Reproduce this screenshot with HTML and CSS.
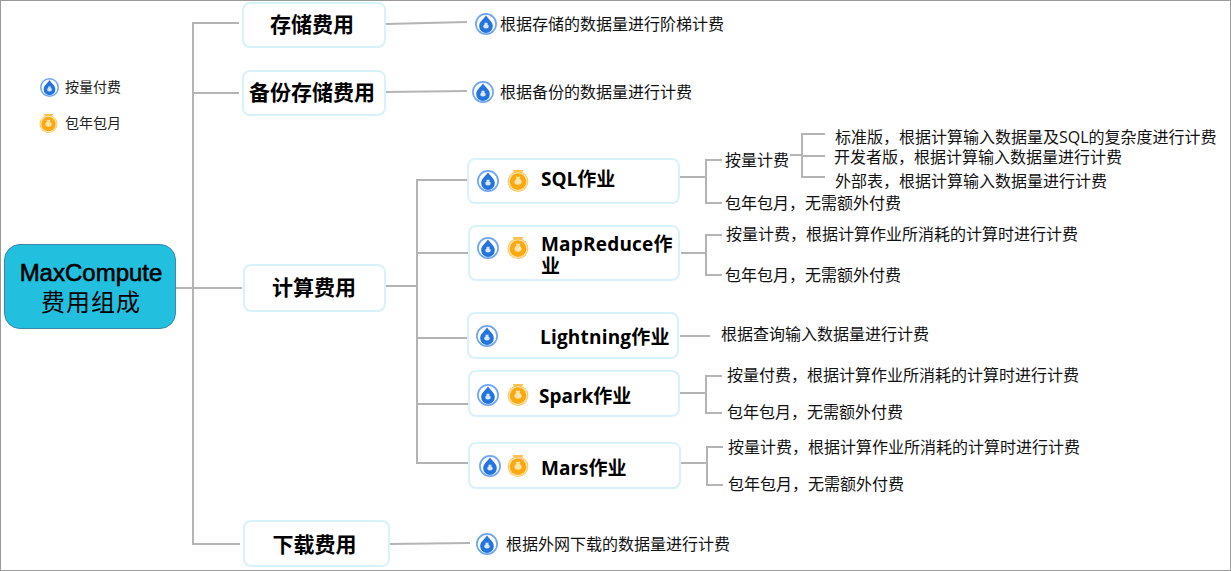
FILE: index.html
```html
<!DOCTYPE html>
<html lang="zh">
<head>
<meta charset="utf-8">
<title>MaxCompute 费用组成</title>
<link rel="stylesheet" href="styles.css">
</head>
<body>
<svg class="defs" width="0" height="0" aria-hidden="true">
  <symbol id="pay" viewBox="0 0 22 22">
    <circle cx="11" cy="11" r="10.100" fill="#fff" stroke="#6fa6f4" stroke-width="1.700"/>
    <path d="M11 2.200C8.800 6 4.200 8.600 4.200 13.200a6.800 6.800 0 0 0 13.600 0C17.800 8.600 13.200 6 11 2.200Z" fill="#2474de"/>
    <path d="M9.300 9.800h3.400l-.5 1.400c1 .5 1.500 1.300 1.500 2.300 0 1.300-1 2-2.700 2s-2.700-.7-2.700-2c0-1 .5-1.800 1.500-2.300Z" fill="#d9e8fc"/>
  </symbol>
  <symbol id="year" viewBox="0 0 22 22">
    <circle cx="11" cy="11.600" r="10.400" fill="#ffc964"/>
    <path d="M5.800 0h10.400l-1.400 3.800H7.200Z" fill="#ffc050"/>
    <circle cx="11" cy="11.600" r="9.200" fill="#fff4dc"/>
    <circle cx="11" cy="11.600" r="8.400" fill="#fba90e"/>
    <path d="M8.600 6.800h4.800l-1 2.200c1.400.7 2.200 1.800 2.200 3.100 0 1.700-1.200 2.600-3.600 2.600s-3.600-.9-3.600-2.600c0-1.300.8-2.400 2.200-3.100Z" fill="#ffe6b0"/>
  </symbol>
</svg>
<main class="canvas">
  <svg class="wires" width="1231" height="571" aria-hidden="true">
    <path d="M239 23H193V544H240"/>
    <path d="M193 93H239M176 288H242"/>
    <path d="M386 24L467 22M386 92L467 91M389 544L470 543"/>
    <path d="M386 286H417M467 180H417V463H469M417 253H469M417 338H468M417 404H469"/>
    <path d="M680 177H706M722 160H706V203H722"/>
    <path d="M790 155H802M825 134H802V177H825M802 156H825"/>
    <path d="M681 253H706M722 235H706V275H722"/>
    <path d="M680 336H710"/>
    <path d="M680 393H706M722 376H706V413H722"/>
    <path d="M681 463H707M723 447H707V485H723"/>
  </svg>

  <div class="legend legend-pay"><svg class="icon"><use href="#pay"/></svg><span>按量付费</span></div>
  <div class="legend legend-year"><svg class="icon"><use href="#year"/></svg><span>包年包月</span></div>

  <div class="root"><b>MaxCompute</b><span>费用组成</span></div>

  <div class="node top n-store">存储费用</div>
  <div class="node top n-backup">备份存储费用</div>
  <div class="node top n-compute">计算费用</div>
  <div class="node top n-download">下载费用</div>

  <div class="node job j-sql"><svg class="icon"><use href="#pay"/></svg><svg class="icon"><use href="#year"/></svg><span class="job-name">SQL作业</span></div>
  <div class="node job j-mr"><svg class="icon"><use href="#pay"/></svg><svg class="icon"><use href="#year"/></svg><span class="job-name">MapReduce作业</span></div>
  <div class="node job j-light"><svg class="icon"><use href="#pay"/></svg><span class="job-name">Lightning作业</span></div>
  <div class="node job j-spark"><svg class="icon"><use href="#pay"/></svg><svg class="icon"><use href="#year"/></svg><span class="job-name">Spark作业</span></div>
  <div class="node job j-mars"><svg class="icon"><use href="#pay"/></svg><svg class="icon"><use href="#year"/></svg><span class="job-name">Mars作业</span></div>

  <div class="note with-icon w1"><svg class="icon"><use href="#pay"/></svg><span>根据存储的数据量进行阶梯计费</span></div>
  <div class="note with-icon w2"><svg class="icon"><use href="#pay"/></svg><span>根据备份的数据量进行计费</span></div>
  <div class="note with-icon w3"><svg class="icon"><use href="#pay"/></svg><span>根据外网下载的数据量进行计费</span></div>

  <div class="note t1">按量计费</div>
  <div class="note t2">标准版，根据计算输入数据量及SQL的复杂度进行计费</div>
  <div class="note t3">开发者版，根据计算输入数据量进行计费</div>
  <div class="note t4">外部表，根据计算输入数据量进行计费</div>
  <div class="note t5">包年包月，无需额外付费</div>
  <div class="note t6">按量计费，根据计算作业所消耗的计算时进行计费</div>
  <div class="note t7">包年包月，无需额外付费</div>
  <div class="note t8">根据查询输入数据量进行计费</div>
  <div class="note t9">按量付费，根据计算作业所消耗的计算时进行计费</div>
  <div class="note t10">包年包月，无需额外付费</div>
  <div class="note t11">按量计费，根据计算作业所消耗的计算时进行计费</div>
  <div class="note t12">包年包月，无需额外付费</div>
</main>
</body>
</html>
```
FILE: styles.css
```css
* { box-sizing: border-box; }
html, body { margin: 0; padding: 0; background: #fff; }
body { width: 1231px; height: 571px; overflow: hidden; }
.defs { position: absolute; }
.canvas {
  position: relative;
  width: 1231px;
  height: 571px;
  border: 1px solid #9a9a9a;
  font-family: "Open Sans", "Noto Sans CJK SC", sans-serif;
  color: #000;
  overflow: hidden;
}
.wires { position: absolute; left: -1px; top: -1px; }
.wires path { fill: none; stroke: #b4b4b4; stroke-width: 2; }

.icon { width: 22px; height: 22px; flex: none; }

.legend, .note, .node, .root { position: absolute; }
.legend { display: flex; align-items: center; font-size: 14px; line-height: 20px; color: #222; }
.legend .icon { width: 19px; height: 19px; }
.legend-pay { left: 39px; top: 76px; gap: 6px; }
.legend-year { left: 38px; top: 112px; gap: 7px; }

.root {
  left: 3px; top: 243px; width: 172px; height: 85px;
  background: #22bfdf;
  border: 1px solid #3d87a8;
  border-radius: 16px;
  display: flex; flex-direction: column; align-items: center; justify-content: center;
  padding-top: 1px;
  color: #000;
  font-size: 24px;
  line-height: 29px;
}
.root b { font-family: "Liberation Sans", sans-serif; font-size: 24px; font-weight: 400; -webkit-text-stroke: .6px #000; margin-left: 2px; }
.root span { letter-spacing: 1px; margin-left: 2px; }

.node {
  background: #fff;
  border: 2px solid #d8f2f9;
  border-radius: 8px;
  color: #000;
  font-weight: 700;
  display: flex; align-items: center;
}
.top { justify-content: center; font-size: 21px; height: 46px; padding-bottom: 2px; }
.n-store { left: 241px; top: 1px; width: 144px; padding: 0 4px 4px 0; }
.n-backup { left: 241px; top: 69px; width: 144px; padding: 0 4px 4px 0; }
.n-compute { left: 242px; top: 263px; width: 143px; height: 48px; padding: 0 1px 4px 0; }
.n-download { left: 242px; top: 519px; width: 147px; height: 47px; padding: 0 4px 1px 0; }

.job { font-size: 19px; line-height: 22px; gap: 8px; }
.job-name { display: block; }
.j-sql { left: 466px; top: 157px; width: 213px; height: 46px; padding: 0 0 4px 8px; }
.j-sql .icon { margin-bottom: -4px; }
.j-sql .job-name { margin-left: 4px; }
.j-mr { left: 467px; top: 224px; width: 212px; height: 56px; padding-left: 7px; }
.j-mr .icon { margin-bottom: 10px; }
.j-mr .job-name { margin: 4px 0 0 4px; width: 138px; letter-spacing: .2px; }
.j-light { left: 466px; top: 311px; width: 212px; height: 47px; padding-left: 7px; }
.j-light .job-name { margin: 2px 0 0 34px; letter-spacing: .2px; }
.j-spark { left: 467px; top: 369px; width: 212px; height: 47px; padding-left: 7px; }
.j-spark .icon { margin-top: 3px; }
.j-spark .job-name { margin: 4px 0 0 2px; }
.j-mars { left: 467px; top: 441px; width: 213px; height: 47px; padding-left: 9px; gap: 6px; }
.j-mars .icon { margin-top: 1px; }
.j-mars .job-name { margin: 4px 0 0 6px; }

.note { font-size: 16px; line-height: 20px; white-space: nowrap; color: #111; }
.with-icon { display: flex; align-items: center; }
.w1 { left: 474px; top: 12px; gap: 3px; }
.w2 { left: 471px; top: 80px; gap: 6px; }
.w3 { left: 475px; top: 532px; gap: 8px; }
.t1 { left: 724px; top: 149px; }
.t2 { left: 834px; top: 126px; }
.t3 { left: 833px; top: 146px; }
.t4 { left: 834px; top: 170px; }
.t5 { left: 724px; top: 192px; }
.t6 { left: 725px; top: 223px; }
.t7 { left: 724px; top: 264px; }
.t8 { left: 720px; top: 323px; }
.t9 { left: 726px; top: 364px; }
.t10 { left: 726px; top: 401px; }
.t11 { left: 727px; top: 436px; }
.t12 { left: 727px; top: 473px; }
```
